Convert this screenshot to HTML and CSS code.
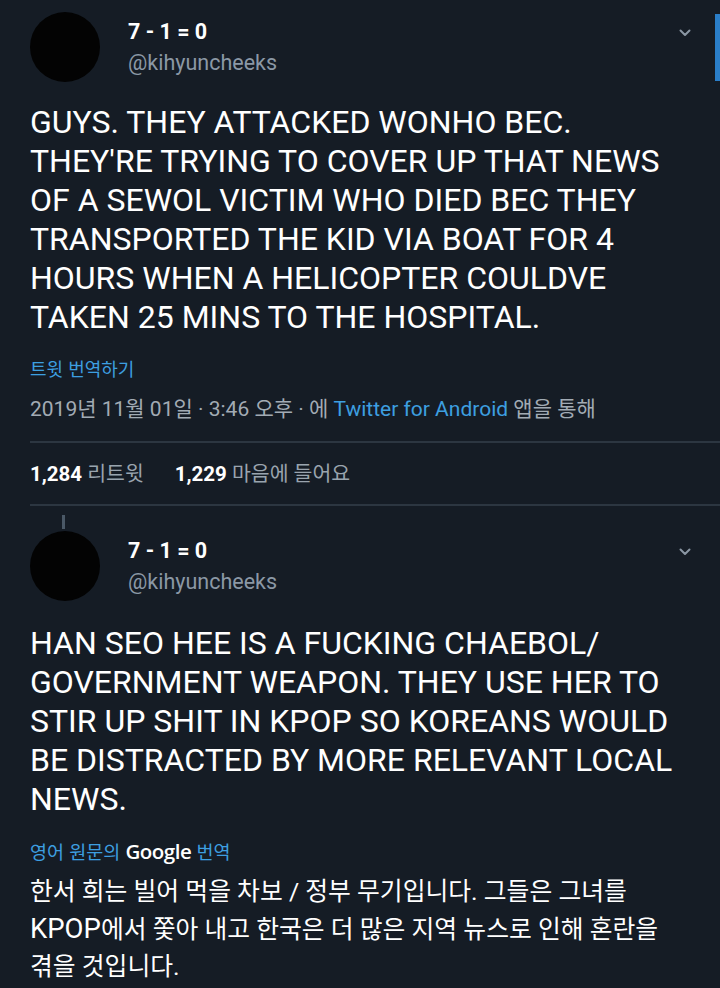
FILE: index.html
```html
<!DOCTYPE html>
<html lang="ko">
<head>
<meta charset="utf-8">
<link rel="stylesheet" href="styles.css">
</head>
<body>
<div class="scrollbar"></div>
<div class="page">
  <article class="tweet first">
    <header class="head">
      <div class="avatar"></div>
      <div class="who">
        <div class="name">7 - 1 = 0</div>
        <div class="handle">@kihyuncheeks</div>
      </div>
      <svg class="chev" viewBox="0 0 12 8" width="12" height="8"><path d="M1.5 1.5 L6 6 L10.5 1.5" fill="none" stroke="#8a96a3" stroke-width="2" stroke-linecap="round" stroke-linejoin="round"/></svg>
    </header>
    <p class="body">GUYS. THEY ATTACKED WONHO BEC.<br>THEY'RE TRYING TO COVER UP THAT NEWS<br>OF A SEWOL VICTIM WHO DIED BEC THEY<br>TRANSPORTED THE KID VIA BOAT FOR 4<br>HOURS WHEN A HELICOPTER COULDVE<br>TAKEN 25 MINS TO THE HOSPITAL.</p>
    <div class="translate">트윗 번역하기</div>
    <div class="meta">2019년 11월 01일 · 3:46 오후 · 에 <span class="link">Twitter for Android</span> 앱을 통해</div>
    <div class="stats">
      <span class="stat"><b>1,284</b> 리트윗</span>
      <span class="stat"><b>1,229</b> 마음에 들어요</span>
    </div>
  </article>
  <article class="tweet second">
    <div class="thread"></div>
    <header class="head">
      <div class="avatar"></div>
      <div class="who">
        <div class="name">7 - 1 = 0</div>
        <div class="handle">@kihyuncheeks</div>
      </div>
      <svg class="chev" viewBox="0 0 12 8" width="12" height="8"><path d="M1.5 1.5 L6 6 L10.5 1.5" fill="none" stroke="#8a96a3" stroke-width="2" stroke-linecap="round" stroke-linejoin="round"/></svg>
    </header>
    <p class="body">HAN SEO HEE IS A FUCKING CHAEBOL/<br>GOVERNMENT WEAPON. THEY USE HER TO<br>STIR UP SHIT IN KPOP SO KOREANS WOULD<br>BE DISTRACTED BY MORE RELEVANT LOCAL<br>NEWS.</p>
    <div class="gtrans">영어 원문의 <span class="google">Google</span> 번역</div>
    <p class="ko">한서 희는 빌어 먹을 차보 / 정부 무기입니다. 그들은 그녀를<br><span class="latin">KPOP</span>에서 쫓아 내고 한국은 더 많은 지역 뉴스로 인해 혼란을<br>겪을 것입니다.</p>
  </article>
</div>
</body>
</html>
```

FILE: styles.css
```css
html, body {
  margin: 0;
  padding: 0;
  background: #151c25;
}
body {
  width: 720px;
  height: 988px;
  overflow: hidden;
  position: relative;
  font-family: Roboto, "Noto Sans CJK KR", sans-serif;
  color: #ffffff;
}
.scrollbar {
  position: absolute;
  right: 0;
  top: 14px;
  width: 5px;
  height: 67px;
  background: #2a7ec8;
}
.page {
  padding-left: 30px;
}
.tweet {
  position: relative;
}
.head {
  display: flex;
  align-items: flex-start;
  padding-right: 29px;
}
.first .head {
  padding-top: 12px;
}
.avatar {
  width: 70px;
  height: 70px;
  border-radius: 50%;
  background: #030303;
  flex: none;
}
.who {
  margin-left: 28px;
  flex: 1;
}
.name {
  font-weight: 700;
  font-size: 21.5px;
  line-height: 26px;
  margin-top: 7px;
}
.handle {
  font-size: 21.5px;
  line-height: 26px;
  margin-top: 5px;
  color: #8b98a5;
}
.chev {
  margin-top: 17px;
}
.body {
  margin: 21px 0 0;
  font-size: 32px;
  line-height: 39px;
  color: #ffffff;
}
.translate {
  margin-top: 18px;
  font-family: "Noto Sans CJK KR", sans-serif;
  font-size: 18px;
  line-height: 26px;
  color: #3d9fe0;
}
.meta {
  margin-top: 15px;
  font-size: 21px;
  line-height: 26px;
  color: #a2abb4;
  font-family: Roboto, "Noto Sans CJK KR", sans-serif;
}
.link {
  color: #3d9fe0;
}
.stats {
  margin-top: 19px;
  border-top: 2px solid #2c3641;
  border-bottom: 2px solid #2c3641;
  padding: 18px 0 17px;
  display: flex;
  gap: 31px;
  font-size: 20.5px;
  line-height: 26px;
  color: #9aa4ae;
}
.stats b {
  color: #ffffff;
  font-weight: 700;
}
.thread {
  position: absolute;
  left: 32px;
  top: 9px;
  width: 3px;
  height: 14px;
  background: #4a5866;
}
.second .head {
  padding-top: 25px;
}
.second .body {
  margin-top: 23px;
}
.gtrans {
  margin-top: 19px;
  font-family: "Noto Sans CJK KR", sans-serif;
  font-size: 18.5px;
  line-height: 26px;
  color: #3d9fe0;
}
.google {
  color: #ffffff;
  font-family: "Open Sans", Roboto, sans-serif;
  font-size: 20.5px;
  font-weight: 600;
  letter-spacing: -0.5px;
}
.ko {
  margin: 9px 0 0;
  font-family: Roboto, "Noto Sans CJK KR", sans-serif;
  font-size: 24.8px;
  line-height: 37px;
  color: #ffffff;
}
.latin {
  font-size: 27.5px;
}
```
